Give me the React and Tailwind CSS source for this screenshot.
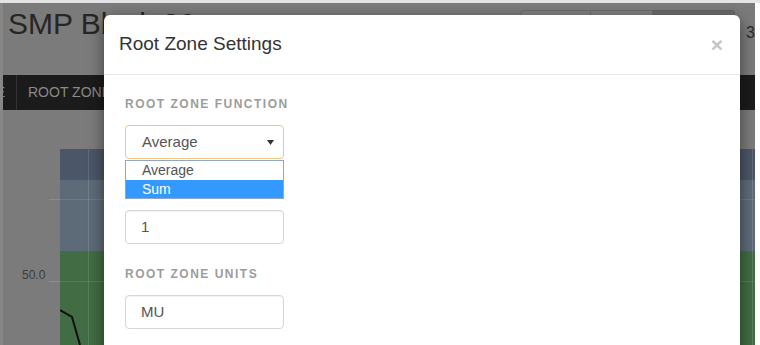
import React from 'react';

const labelCls =
  'block text-[12px] leading-[16px] font-bold tracking-[1.5px] uppercase text-[#9c9c9c]';

function Field({ label, value, className = '' }) {
  return (
    <div className={className}>
      {label ? <label className={labelCls}>{label}</label> : <div className="h-[16px]" />}
      <div className="mt-[13px] w-[159px] h-[34px] flex items-center pl-[15px] border border-[#d6d6d6] rounded-[4px] shadow-[inset_0_1px_1px_rgba(0,0,0,0.05)] text-[15px] text-[#555]">
        {value}
      </div>
    </div>
  );
}

function Chart() {
  return (
    <svg width="695" height="196" viewBox="0 0 695 196" className="block">
      <rect x="0" y="0" width="695" height="31" fill="#4b5668" />
      <rect x="0" y="31" width="695" height="71" fill="#5d6b79" />
      <rect x="0" y="102" width="695" height="94" fill="#426c43" />
      <line x1="28.5" y1="0" x2="28.5" y2="196" stroke="rgba(255,255,255,0.13)" />
      <line x1="692.5" y1="0" x2="692.5" y2="196" stroke="rgba(255,255,255,0.13)" />
      <line x1="0" y1="50.5" x2="695" y2="50.5" stroke="rgba(255,255,255,0.1)" />
      <line x1="0" y1="132.5" x2="695" y2="132.5" stroke="rgba(255,255,255,0.1)" />
      <polyline points="0,161 12,168 20,196" fill="none" stroke="#111" strokeWidth="2" />
    </svg>
  );
}

export default function App() {
  return (
    <div className="relative w-[760px] h-[345px] overflow-hidden flex flex-col bg-[#7b7b7b] font-['Liberation_Sans',Arial,sans-serif]">
      {/* page behind the backdrop */}
      <div className="h-[3px] bg-[#e4e4e4]" />
      <div className="flex-1 flex min-h-0">
        <div className="w-[3px] bg-[#878787]" />
        <div className="flex-1 flex flex-col overflow-hidden">
          <div className="h-[72px] flex shrink-0">
            <div className="w-[519px] pl-[5px] pt-[4px] text-[30px] leading-[34px] text-[#262626] whitespace-nowrap">
              SMP Block 20
            </div>
            <div className="flex mt-[7px] h-[30px]">
              <div className="w-[71px] border border-[#6c6c6c] bg-[#7f7f7f] rounded-l-[4px]" />
              <div className="w-[62px] border-y border-r border-[#6c6c6c] bg-[#7f7f7f]" />
              <div className="w-[82px] border-y border-r border-[#5e5e5e] bg-[#6a6a6a] rounded-r-[4px]" />
            </div>
            <div className="ml-[11px] mt-[20px] text-[16px] leading-[20px] text-[#2a2a2a]">3</div>
          </div>
          <div className="h-[35px] shrink-0 flex items-center bg-[#1b1b1b] text-[14px] text-[#8a8a8a]">
            <div className="w-[13px] h-full flex items-center justify-end overflow-hidden">
              <span className="mr-[11px]">E</span>
            </div>
            <div className="w-px h-full bg-[#333]" />
            <span className="pl-[11px] whitespace-nowrap">ROOT ZONE</span>
          </div>
          <div className="flex-1 flex">
            <div className="w-[57px] flex flex-col">
              <div className="mt-[89px] ml-auto w-[11px] h-px bg-[#8c8c8c]" />
              <div className="mt-[68px] h-[14px] flex items-end justify-between">
                <span className="pl-[19px] text-[12px] leading-[14px] text-[#3c3c3c]">50.0</span>
                <div className="w-[11px] h-px bg-[#8c8c8c]" />
              </div>
            </div>
            <div className="flex-1 pt-[39px]">
              <Chart />
            </div>
          </div>
        </div>
        <div className="w-[5px] bg-white" />
      </div>

      {/* modal */}
      <div className="absolute left-[104px] top-[15px] w-[636px] h-[345px] bg-white rounded-t-[6px] shadow-[0_5px_15px_rgba(0,0,0,0.5)]">
        <div className="h-[60px] flex items-center justify-between border-b border-[#e5e5e5] pl-[15px] pr-[17px]">
          <h4 className="text-[19px] text-[#333]">Root Zone Settings</h4>
          <span className="text-[21px] font-bold leading-none text-[#c4c4c4]">×</span>
        </div>
        <div className="px-[21px] pt-[21px]">
          <div>
            <label className={labelCls}>Root Zone Function</label>
            <div className="relative mt-[13px] w-[159px]">
              <div className="h-[34px] flex items-center justify-between pl-[16px] pr-[9px] border border-[#f2c586] rounded-[4px] text-[15px] text-[#555]">
                <span>Average</span>
                <svg width="7" height="5" viewBox="0 0 7 5">
                  <polygon points="0,0 7,0 3.5,5" fill="#333" />
                </svg>
              </div>
              <div className="absolute left-0 top-full mt-px w-[159px] border border-[#8ea6c8] bg-white text-[14px] z-10">
                <div className="h-[19px] flex items-center pl-[16px] text-[#555]">Average</div>
                <div className="h-[18px] flex items-center pl-[16px] bg-[#3399ff] text-white">Sum</div>
              </div>
            </div>
          </div>
          <Field className="mt-[22px]" value="1" />
          <Field className="mt-[22px]" label="Root Zone Units" value="MU" />
        </div>
      </div>
    </div>
  );
}
